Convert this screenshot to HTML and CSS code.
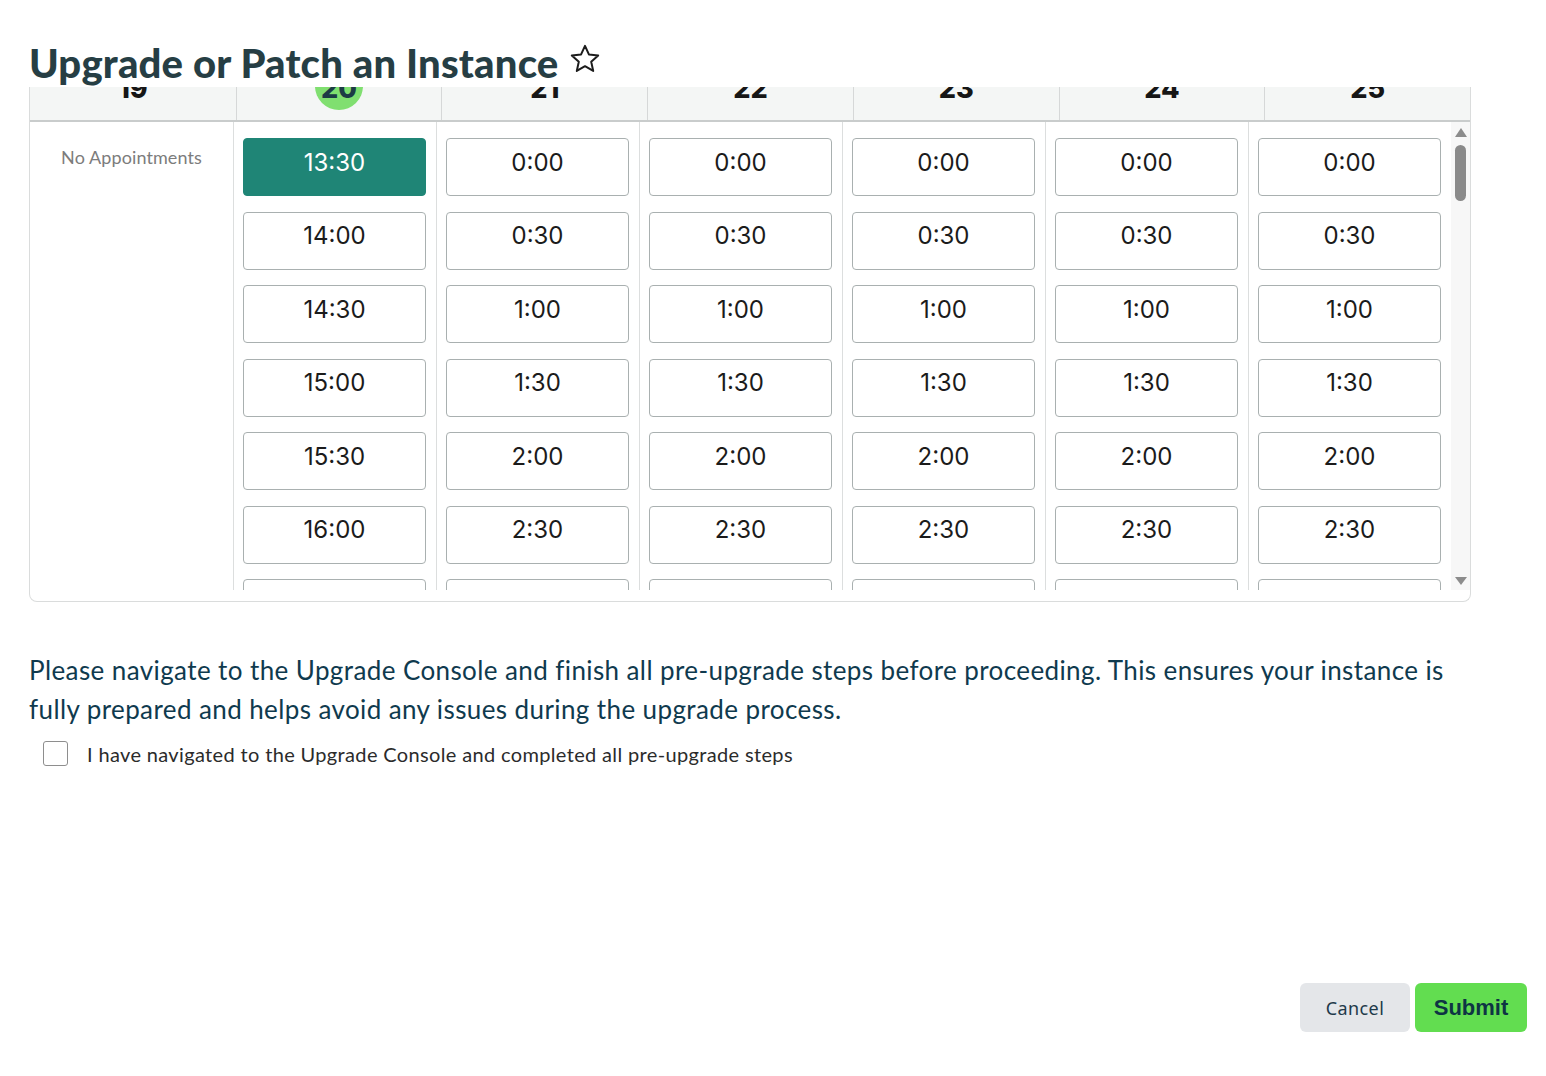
FILE: index.html
```html
<!DOCTYPE html>
<html lang="en">
<head>
<meta charset="utf-8">
<title>Upgrade or Patch an Instance</title>
<link rel="stylesheet" href="styles.css">
</head>
<body>
<div class="page">
  <header class="title-bar">
    <h1 class="title">Upgrade or Patch an Instance</h1>
    <svg class="star" width="32" height="32" viewBox="0 0 32 32" aria-hidden="true">
      <path d="M16 2.8l3.9 8.6 9.3 1-7 6.3 2 9.2L16 23.2l-8.2 4.7 2-9.2-7-6.3 9.3-1z" fill="none" stroke="#1c1c1c" stroke-width="2" stroke-linejoin="round"/>
    </svg>
  </header>

  <section class="card">
    <div class="cal-head">
      <div class="day"><span class="num">19</span></div>
      <div class="day"><span class="num today">20</span></div>
      <div class="day"><span class="num">21</span></div>
      <div class="day"><span class="num">22</span></div>
      <div class="day"><span class="num">23</span></div>
      <div class="day"><span class="num">24</span></div>
      <div class="day"><span class="num">25</span></div>
    </div>
    <div class="cal-body">
      <div class="col col-empty"><span class="empty">No Appointments</span></div>
      <div class="col">
        <button class="slot selected">13:30</button>
        <button class="slot">14:00</button>
        <button class="slot">14:30</button>
        <button class="slot">15:00</button>
        <button class="slot">15:30</button>
        <button class="slot">16:00</button>
        <button class="slot">16:30</button>
      </div>
      <div class="col">
        <button class="slot">0:00</button><button class="slot">0:30</button><button class="slot">1:00</button><button class="slot">1:30</button><button class="slot">2:00</button><button class="slot">2:30</button><button class="slot">3:00</button>
      </div>
      <div class="col">
        <button class="slot">0:00</button><button class="slot">0:30</button><button class="slot">1:00</button><button class="slot">1:30</button><button class="slot">2:00</button><button class="slot">2:30</button><button class="slot">3:00</button>
      </div>
      <div class="col">
        <button class="slot">0:00</button><button class="slot">0:30</button><button class="slot">1:00</button><button class="slot">1:30</button><button class="slot">2:00</button><button class="slot">2:30</button><button class="slot">3:00</button>
      </div>
      <div class="col">
        <button class="slot">0:00</button><button class="slot">0:30</button><button class="slot">1:00</button><button class="slot">1:30</button><button class="slot">2:00</button><button class="slot">2:30</button><button class="slot">3:00</button>
      </div>
      <div class="col">
        <button class="slot">0:00</button><button class="slot">0:30</button><button class="slot">1:00</button><button class="slot">1:30</button><button class="slot">2:00</button><button class="slot">2:30</button><button class="slot">3:00</button>
      </div>
      <div class="scrollbar">
        <span class="arrow up"></span>
        <span class="thumb"></span>
        <span class="track"></span>
        <span class="arrow down"></span>
      </div>
    </div>
  </section>

  <p class="notice">Please navigate to the Upgrade Console and finish all pre-upgrade steps before proceeding. This ensures your instance is fully prepared and helps avoid any issues during the upgrade process.</p>

  <label class="check-row">
    <span class="checkbox"></span>
    <span class="check-label">I have navigated to the Upgrade Console and completed all pre-upgrade steps</span>
  </label>

  <footer class="actions">
    <button class="btn btn-cancel">Cancel</button>
    <button class="btn btn-submit">Submit</button>
  </footer>
</div>
</body>
</html>
```

FILE: styles.css
```css
* { box-sizing: border-box; }

html, body {
  margin: 0;
  padding: 0;
  background: #ffffff;
}

.page {
  min-height: 1076px;
  display: flex;
  flex-direction: column;
  padding: 0 19px 0 29px;
  font-family: "Lato", "Noto Sans", sans-serif;
}

/* Title */
.title-bar {
  height: 87px;
  display: flex;
  align-items: flex-end;
  gap: 11px;
  padding-bottom: 1px;
  background: #fff;
}
.title {
  margin: 0;
  font-family: "Lato", sans-serif;
  font-weight: 900;
  font-size: 40px;
  line-height: 46px;
  color: #263e44;
  letter-spacing: 0.2px;
}
.star {
  align-self: flex-start;
  margin-top: 43px;
}

/* Calendar card */
.card {
  width: 1442px;
  border: 1px solid #dadcdc;
  border-top: none;
  border-radius: 0 0 8px 8px;
  padding-bottom: 11px;
  overflow: hidden;
}

.cal-head {
  display: grid;
  grid-template-columns: repeat(7, 1fr);
  height: 35px;
  background: #f4f6f5;
  border-bottom: 2px solid #c9cccc;
  overflow: hidden;
}
.day {
  display: flex;
  flex-direction: column;
  justify-content: flex-end;
  align-items: center;
  padding-bottom: 10px;
  border-left: 1px solid #d6d8d8;
  overflow: hidden;
}
.day:first-child { border-left: none; }
.num {
  width: 48px;
  height: 48px;
  border-radius: 50%;
  display: flex;
  align-items: center;
  justify-content: center;
  padding-top: 5px;
  font-family: "Inter", sans-serif;
  font-weight: 800;
  font-size: 27px;
  color: #161616;
  flex-shrink: 0;
}
.num.today {
  background: #80df70;
  color: #1c3b45;
}

.cal-body {
  display: flex;
  height: 468px;
  overflow: hidden;
}
.col {
  width: 203px;
  flex-shrink: 0;
  display: flex;
  flex-direction: column;
  gap: 15.5px;
  padding: 16px 10px 0 9px;
  border-left: 1px solid #dcdede;
}
.col-empty {
  border-left: none;
  align-items: center;
  padding: 24px 0 0;
}
.empty {
  font-family: "Lato", sans-serif;
  font-size: 18px;
  color: #7c7c7c;
  letter-spacing: 0.1px;
}
.slot {
  flex-shrink: 0;
  height: 58px;
  width: 183px;
  background: #fff;
  border: 1px solid #a9b0b0;
  border-radius: 4px;
  font-family: "Inter", sans-serif;
  font-size: 24px;
  font-weight: 400;
  color: #1b1b1b;
  padding: 0 0 10px;
  cursor: pointer;
}
.slot.selected {
  background: #1f8576;
  border-color: #1f8576;
  color: #ffffff;
}

.scrollbar {
  width: 19px;
  flex-shrink: 0;
  background: #f7f7f7;
  display: flex;
  flex-direction: column;
  align-items: center;
  padding: 6px 0 5px;
}
.arrow {
  width: 0;
  height: 0;
  border-left: 6px solid transparent;
  border-right: 6px solid transparent;
}
.arrow.up { border-bottom: 9px solid #8c8c8c; }
.arrow.down { border-top: 8px solid #8c8c8c; }
.thumb {
  width: 11px;
  height: 56px;
  margin-top: 8px;
  border-radius: 6px;
  background: #8a8a8a;
}
.track { flex: 1; }

/* Notice */
.notice {
  margin: 49px 0 0;
  font-family: "Lato", sans-serif;
  font-size: 26px;
  line-height: 39px;
  letter-spacing: 0.4px;
  color: #0f3a4e;
  max-width: 1440px;
}

.check-row {
  display: flex;
  align-items: center;
  gap: 19px;
  margin-top: 12px;
  padding-left: 14px;
}
.checkbox {
  width: 25px;
  height: 25px;
  border: 1px solid #8e8e8e;
  border-radius: 3px;
  background: #fff;
}
.check-label {
  font-family: "Lato", sans-serif;
  font-size: 20px;
  letter-spacing: 0.35px;
  color: #2b2b2b;
}

/* Actions */
.actions {
  margin-top: auto;
  padding-bottom: 44px;
  display: flex;
  justify-content: flex-end;
  gap: 5px;
}
.btn {
  height: 49px;
  border: none;
  border-radius: 6px;
  cursor: pointer;
}
.btn-cancel {
  width: 110px;
  background: #e4e6e9;
  font-family: "Noto Sans", sans-serif;
  font-size: 18px;
  letter-spacing: 0.4px;
  color: #1e3a4a;
}
.btn-submit {
  width: 112px;
  background: #62dd50;
  font-family: "Liberation Sans", Arial, sans-serif;
  font-weight: 700;
  font-size: 22px;
  color: #0e3444;
}
```
